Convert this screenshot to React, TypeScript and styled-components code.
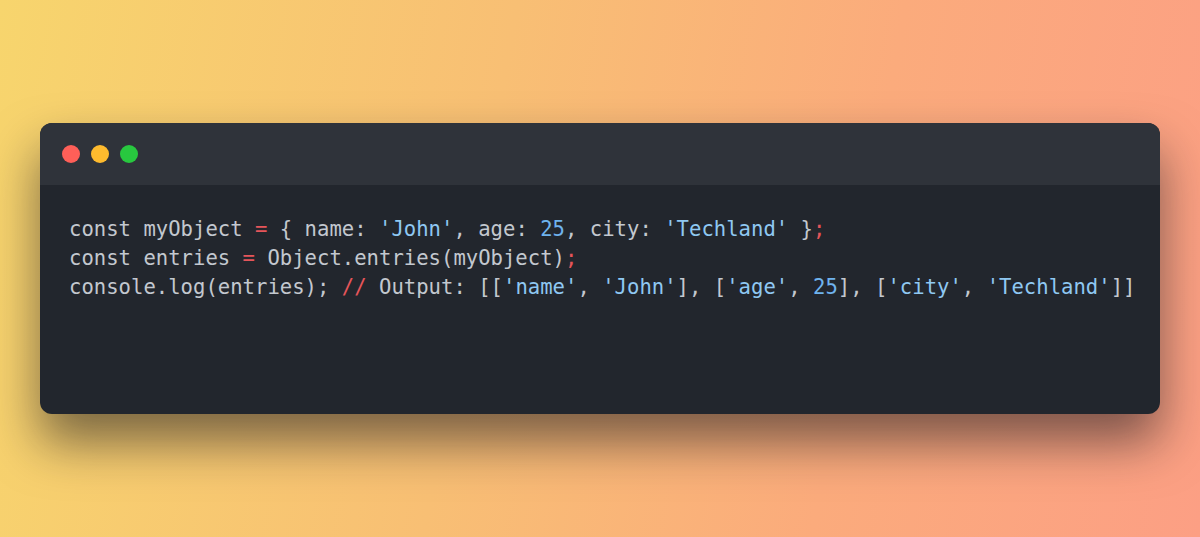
import React from "react";
import styled, { createGlobalStyle } from "styled-components";

const Global = createGlobalStyle`
  html, body { margin: 0; padding: 0; }
  body { width: 1200px; height: 537px; overflow: hidden; }
`;

const Page = styled.div`
  width: 1200px;
  height: 537px;
  box-sizing: border-box;
  padding: 123px 40px 0 40px;
  background: linear-gradient(100deg, #f7d56d 0%, #f8bf74 40%, #fbab7c 70%, #fc9f84 100%);
`;

const Window = styled.div`
  height: 291px;
  border-radius: 12px;
  overflow: hidden;
  background: #22262d;
  box-shadow: 0 28px 50px rgba(20, 20, 30, 0.55);
  display: flex;
  flex-direction: column;
`;

const TitleBar = styled.div`
  height: 62px;
  flex: none;
  background: #2f333a;
  display: flex;
  align-items: center;
  gap: 11px;
  padding: 0 0 0 22px;
`;

const Dot = styled.span<{ $c: string }>`
  width: 18px;
  height: 18px;
  border-radius: 50%;
  background: ${(p) => p.$c};
`;

const Code = styled.pre`
  margin: 0;
  padding: 30px 29px;
  font-family: "DejaVu Sans Mono", "Liberation Mono", monospace;
  font-size: 20.6px;
  line-height: 29px;
  color: #c3c8cf;
  white-space: pre;
`;

const Str = styled.span`color: #8fc8f2;`;
const Num = styled.span`color: #6fb3ee;`;
const Op = styled.span`color: #e5555a;`;

export default function App() {
  return (
    <>
      <Global />
      <Page>
        <Window>
          <TitleBar>
            <Dot $c="#fe5f58" />
            <Dot $c="#febb2e" />
            <Dot $c="#28c83f" />
          </TitleBar>
          <Code>
            {"const myObject "}<Op>=</Op>{" { name: "}<Str>'John'</Str>{", age: "}<Num>25</Num>{", city: "}<Str>'Techland'</Str>{" }"}<Op>;</Op>
            {"\nconst entries "}<Op>=</Op>{" Object.entries(myObject)"}<Op>;</Op>
            {"\nconsole.log(entries); "}<Op>//</Op>{" Output: [["}<Str>'name'</Str>{", "}<Str>'John'</Str>{"], ["}<Str>'age'</Str>{", "}<Num>25</Num>{"], ["}<Str>'city'</Str>{", "}<Str>'Techland'</Str>{"]]"}
          </Code>
        </Window>
      </Page>
    </>
  );
}
